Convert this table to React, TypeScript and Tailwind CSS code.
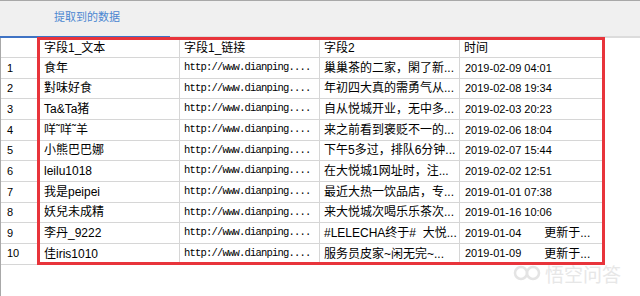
import React from "react";

const rows = [
  { n: "1", name: "食年", desc: "巢巢茶的二家，閑了新...", time: "2019-02-09 04:01", more: "" },
  { n: "2", name: "對味好食", desc: "年初四大真的需勇气从...", time: "2019-02-08 19:34", more: "" },
  { n: "3", name: "Ta&Ta猪", desc: "自从悦城开业，无中多...", time: "2019-02-03 20:23", more: "" },
  { n: "4", name: "咩˜咩˜羊", desc: "来之前看到褒贬不一的...", time: "2019-02-06 18:04", more: "" },
  { n: "5", name: "小熊巴巴娜", desc: "下午5多过，排队6分钟...", time: "2019-02-07 15:44", more: "" },
  { n: "6", name: "leilu1018", desc: "在大悦城1网址时，注...", time: "2019-02-02 12:51", more: "" },
  { n: "7", name: "我是peipei", desc: "最近大热一饮品店，专...", time: "2019-01-01 07:38", more: "" },
  { n: "8", name: "妖兒未成精", desc: "来大悦城次喝乐乐茶次...", time: "2019-01-16 10:06", more: "" },
  { n: "9", name: "李丹_9222", desc: "#LELECHA终于#  大悦...", time: "2019-01-04", more: "更新于..." },
  { n: "10", name: "佳iris1010", desc: "服务员皮家~闲无完~...", time: "2019-01-09", more: "更新于..." },
];

const cjk = "font-['Liberation_Sans','Noto_Sans_CJK_SC',sans-serif]";
const mono = "font-['Liberation_Mono','Noto_Sans_CJK_SC',monospace]";

export default function App() {
  return (
    <div className={`relative w-[640px] h-[296px] overflow-hidden bg-white text-black ${cjk}`}>
      {/* tab strip */}
      <div className="h-[36px] bg-[#f0f0f0] border-t border-[#a8a8a8] flex items-center pl-[54px]">
        <span className="text-[11px] text-[#4a86d0] pb-[2px]">提取到的数据</span>
      </div>
      <div className="flex h-[2px]">
        <div className="w-[170px] bg-[#3f73c4]" />
        <div className="flex-1 bg-[#dcdcdc]" />
      </div>

      {/* grid */}
      <div className="border-l border-[#a8a8a8] h-[258px]">
        <div className="grid grid-cols-[37px_142px_140px_140px_143px] w-[602px]">
          <div className="h-[20px] border-b border-[#d6d6d6]" />
          <div className="h-[20px] border-b border-r border-[#d6d6d6] pl-[6px] flex items-center text-[12px]">字段1_文本</div>
          <div className="h-[20px] border-b border-r border-[#d6d6d6] pl-[4px] flex items-center text-[12px]">字段1_链接</div>
          <div className="h-[20px] border-b border-r border-[#d6d6d6] pl-[4px] flex items-center text-[12px]">字段2</div>
          <div className="h-[20px] border-b border-r border-[#d6d6d6] pl-[4px] flex items-center text-[12px]">时间</div>
          {rows.map((r) => (
            <React.Fragment key={r.n}>
              <div className="h-[20.67px] border-b border-[#d6d6d6] pl-[6px] flex items-center text-[11px]">{r.n}</div>
              <div className="h-[20.67px] border-b border-r border-[#d6d6d6] pl-[6px] flex items-center text-[12px] whitespace-pre">{r.name}</div>
              <div className={`h-[20.67px] border-b border-r border-[#d6d6d6] pl-[4px] flex items-center text-[10.5px] tracking-[-0.8px] ${mono}`}>http://www.dianping....</div>
              <div className="h-[20.67px] border-b border-r border-[#d6d6d6] pl-[4px] flex items-center text-[12px] whitespace-pre">{r.desc}</div>
              <div className="h-[20.67px] border-b border-r border-[#d6d6d6] pl-[5px] flex items-center">
                <span className="text-[11px]">{r.time}</span>
                {r.more && <span className="ml-[23px] text-[12px]">{r.more}</span>}
              </div>
            </React.Fragment>
          ))}
        </div>
      </div>

      {/* red annotation frame */}
      <div className="absolute left-[37px] top-[37px] w-[568px] h-[228px] border-[3px] border-[#e8343b] pointer-events-none" />

      {/* watermark */}
      <div className="absolute left-[513px] top-[263px] flex items-center gap-[4px] opacity-80 pointer-events-none">
        <svg width="28" height="20" viewBox="0 0 28 20" fill="none" stroke="#dedede" strokeWidth="2.5">
          <circle cx="8" cy="10" r="6" />
          <circle cx="20" cy="10" r="6" />
        </svg>
        <span className="text-[19px] leading-none text-[#e2e2e2] font-['Noto_Sans_CJK_SC',sans-serif]">悟空问答</span>
      </div>
    </div>
  );
}
